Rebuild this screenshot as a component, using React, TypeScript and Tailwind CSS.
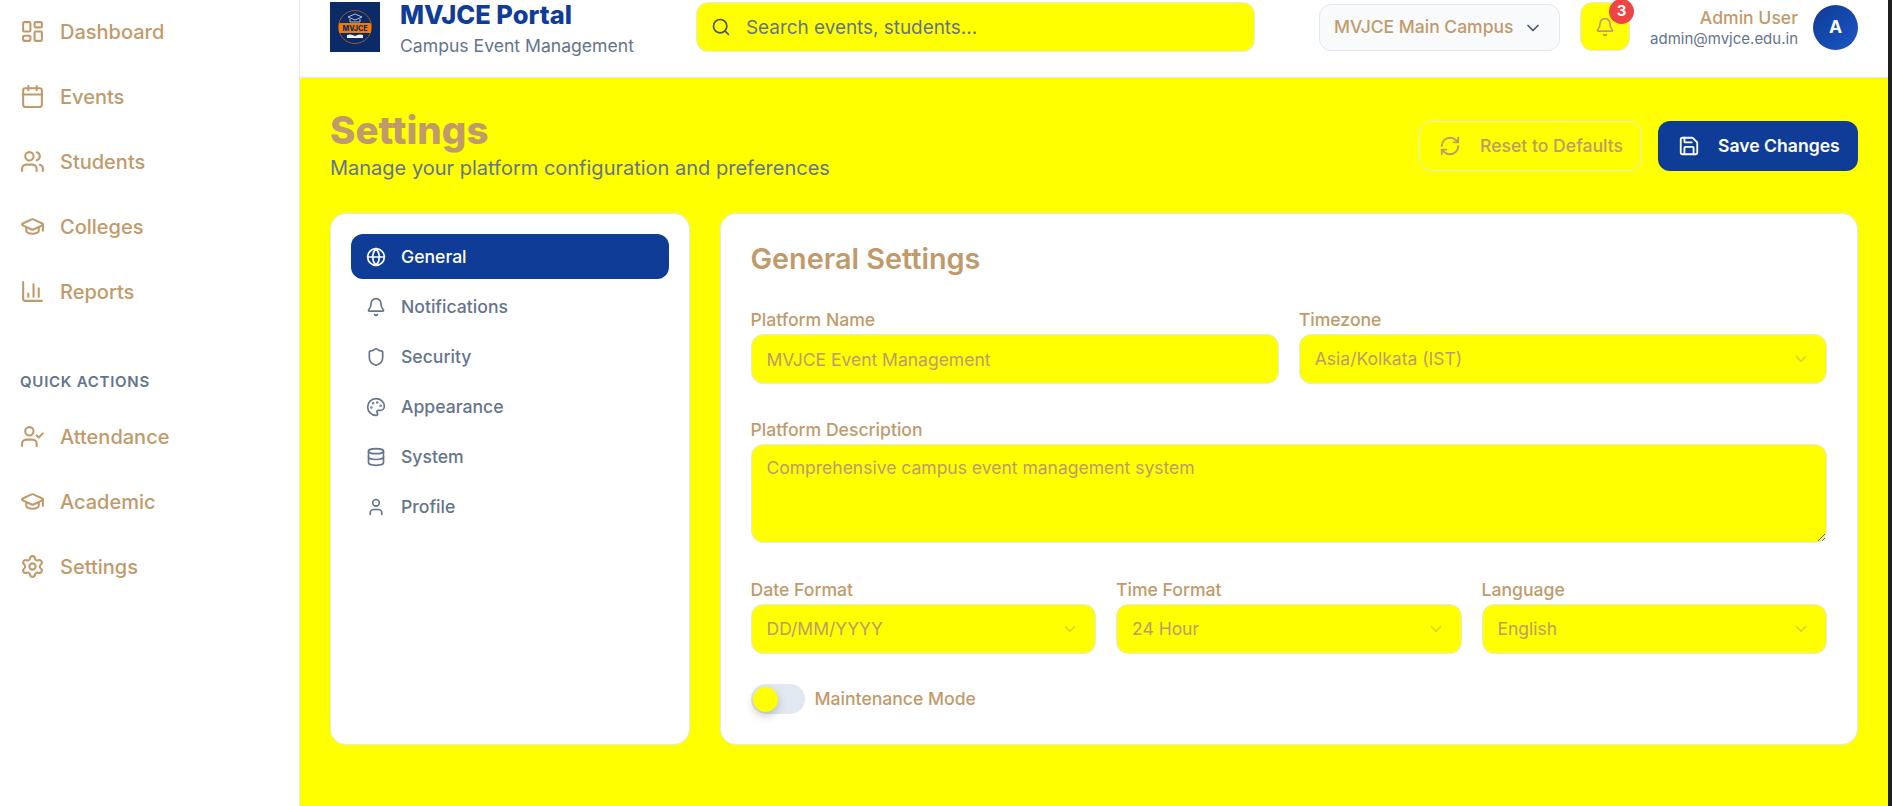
import { useState } from 'react';
import {
  LayoutDashboard, Calendar, Users, GraduationCap, ChartColumn, UserCheck, Settings, Search, ChevronDown, Bell,
  RefreshCw, Save, Globe, Shield, Palette, Database, User,
} from 'lucide-react';

const mainNav = [
  { label: 'Dashboard', icon: LayoutDashboard },
  { label: 'Events', icon: Calendar },
  { label: 'Students', icon: Users },
  { label: 'Colleges', icon: GraduationCap },
  { label: 'Reports', icon: ChartColumn },
];

const quickNav = [
  { label: 'Attendance', icon: UserCheck },
  { label: 'Academic', icon: GraduationCap },
  { label: 'Settings', icon: Settings },
];

const tabs = [
  { label: 'General', icon: Globe },
  { label: 'Notifications', icon: Bell },
  { label: 'Security', icon: Shield },
  { label: 'Appearance', icon: Palette },
  { label: 'System', icon: Database },
  { label: 'Profile', icon: User },
];

function Logo() {
  return (
    <svg viewBox="0 0 50 50" className="w-[50px] h-[50px] shrink-0">
      <rect width="50" height="50" fill="#0b2a66" />
      <circle cx="25" cy="25" r="16.5" fill="#0b2a66" stroke="#b5662a" strokeWidth="0.8" />
      <path d="M25 12l7 3-7 3-7-3z" fill="none" stroke="#dbe4f3" strokeWidth="0.8" />
      <path d="M20 17v3h10v-3" fill="none" stroke="#dbe4f3" strokeWidth="0.8" />
      <rect x="9" y="21" width="32" height="10" rx="1" fill="#f47a00" />
      <text x="25" y="29" textAnchor="middle" fontSize="7" fontWeight="800" fill="#0b2a66" fontFamily="Inter, sans-serif">MVJCE</text>
      <path d="M17 33q4-1.5 8 1q4-2.500 8-1v3h-16z" fill="#f3f4f8" />
    </svg>
  );
}

function SideItem({ label, icon: Icon }: { label: string; icon: typeof Bell }) {
  return (
    <div className="flex items-center gap-[15px] h-[65px] pl-5 text-[#c19a6b]">
      <Icon size={25} strokeWidth={2} className="shrink-0" />
      <span className="text-[20px] font-medium">{label}</span>
    </div>
  );
}

function Label({ children }: { children: string }) {
  return <label className="block h-[29px] text-[17.6px] leading-[30px] font-medium text-[#c19a6b]">{children}</label>;
}

const fieldClass = 'w-full h-[50px] rounded-xl border border-[#e2e8f0] bg-[#ffff00] px-[15px] text-[17.5px] text-[#c19a6b] outline-none';

function TextField({ label, value }: { label: string; value: string }) {
  return (
    <div>
      <Label>{label}</Label>
      <input readOnly value={value} className={fieldClass} />
    </div>
  );
}

function SelectField({ label, value }: { label: string; value: string }) {
  return (
    <div>
      <Label>{label}</Label>
      <div className="relative">
        <select defaultValue={value} className={`${fieldClass} appearance-none`}>
          <option>{value}</option>
        </select>
        <ChevronDown size={18} className="absolute right-[17px] top-4 text-[#c19a6b] opacity-50" />
      </div>
    </div>
  );
}

export default function App() {
  const [active] = useState('General');

  return (
    <div className="flex h-screen overflow-hidden border-r-[4px] border-[#1f1f1f] bg-white font-['Inter',sans-serif]">
      <aside className="w-[300px] shrink-0 border-r border-[#e2e8f0] bg-white">
        <div className="-mt-px">
          {mainNav.map(item => <SideItem key={item.label} {...item} />)}
        </div>
        <p className="mt-[47px] mb-[11px] h-[22px] pl-5 text-[15px] leading-[22px] font-semibold tracking-wider text-[#64748b]">QUICK ACTIONS</p>
        {quickNav.map(item => <SideItem key={item.label} {...item} />)}
      </aside>

      <div className="flex-1 min-w-0 flex flex-col">
        <header className="flex h-[78px] shrink-0 items-start border-b border-[#e2e8f0] bg-white pl-[30px] pr-[30px]">
          <div className="mt-0.5">
            <Logo />
          </div>
          <div className="ml-5 w-[296px]">
            <h1 className="text-[25.5px] leading-[30px] font-extrabold text-[#0f3c96]">MVJCE Portal</h1>
            <p className="mt-[3px] text-[17.6px] leading-[26px] text-[#64748b]">Campus Event Management</p>
          </div>
          <div className="flex items-center gap-[15px] mt-0.5 w-[559px] h-[50px] rounded-xl border border-[#e2e8f0] bg-[#ffff00] px-[14px]">
            <Search size={20} className="shrink-0 text-[#475569]" />
            <span className="mt-[3px] text-[18.9px] text-[#64748b]">Search events, students...</span>
          </div>
          <div className="flex items-center justify-between mt-1 ml-[64px] w-[241px] h-[47px] rounded-xl border border-[#e2e8f0] bg-[#f8fafc] pl-[14px] pr-4">
            <span className="text-[17.5px] font-medium text-[#c19a6b]">MVJCE Main Campus</span>
            <ChevronDown size={20} className="shrink-0 text-[#475569]" />
          </div>
          <div className="relative mt-0.5 ml-5 flex w-[50px] h-[49px] items-center justify-center rounded-xl border border-[#e2e8f0] bg-[#ffff00] text-[#c19a6b]">
            <Bell size={20} />
            <span className="absolute -top-[4px] -right-[5px] flex h-[25px] w-[25px] items-center justify-center rounded-full bg-[#ef4444] text-[15px] font-bold text-white">3</span>
          </div>
          <div className="ml-5 flex-1 text-right">
            <p className="mt-[7px] text-[17.6px] leading-[22px] font-medium text-[#c19a6b]">Admin User</p>
            <p className="text-[15px] leading-[20px] text-[#64748b]">admin@mvjce.edu.in</p>
          </div>
          <div className="ml-[15px] mt-[5px] flex h-[45px] w-[45px] shrink-0 items-center justify-center rounded-full bg-gradient-to-br from-[#0f3c96] to-[#1a56c4] text-[17.6px] font-bold text-white">A</div>
        </header>

        <main className="flex-1 bg-[#ffff00] pt-[30px] px-[30px]">
          <div className="flex items-start justify-between">
            <div>
              <h2 className="text-[38.5px] leading-[45px] font-extrabold text-[#c19a6b]">Settings</h2>
              <p className="text-[20px] leading-[30px] text-[#64748b]">Manage your platform configuration and preferences</p>
            </div>
            <div className="flex gap-4 mt-[13px]">
              <button className="flex items-center gap-[19px] h-[50px] w-[223px] pl-[19px] whitespace-nowrap rounded-xl border border-[#e2e8f0] bg-[#ffff00] text-[17.6px] font-medium text-[#c19a6b]">
                <RefreshCw size={22} className="shrink-0" /> Reset to Defaults
              </button>
              <button className="flex items-center gap-[18px] h-[50px] w-[200px] pl-5 whitespace-nowrap rounded-xl bg-[#0f3c96] text-[17.6px] font-semibold text-white">
                <Save size={22} className="shrink-0" /> Save Changes
              </button>
            </div>
          </div>

          <div className="grid grid-cols-4 gap-[30px] mt-[30px]">
            <nav className="h-[532px] rounded-2xl border border-[#e2e8f0] bg-white p-5">
              <div className="flex flex-col gap-[5px]">
                {tabs.map(({ label, icon: Icon }) => (
                  <div key={label} className={`flex items-center gap-[15px] h-[45px] px-[15px] pt-px rounded-xl text-[17.6px] font-medium ${active === label ? 'bg-[#0f3c96] text-white' : 'text-[#64748b]'}`}>
                    <Icon size={20} className="shrink-0" />
                    {label}
                  </div>
                ))}
              </div>
            </nav>

            <section className="col-span-3 h-[532px] rounded-2xl border border-[#e2e8f0] bg-white px-[30px] pt-[25px]">
              <h3 className="text-[28.8px] leading-[40px] font-semibold text-[#c19a6b]">General Settings</h3>
              <div className="grid grid-cols-2 gap-5 mt-[26px]">
                <TextField label="Platform Name" value="MVJCE Event Management" />
                <SelectField label="Timezone" value="Asia/Kolkata (IST)" />
              </div>
              <div className="mt-[31px]">
                <Label>Platform Description</Label>
                <textarea readOnly defaultValue="Comprehensive campus event management system" className={`${fieldClass} h-[99px] py-[10px] block`} />
              </div>
              <div className="grid grid-cols-3 gap-5 mt-[32px]">
                <SelectField label="Date Format" value="DD/MM/YYYY" />
                <SelectField label="Time Format" value="24 Hour" />
                <SelectField label="Language" value="English" />
              </div>
              <div className="flex items-center gap-[10px] mt-[30px]">
                <div className="relative h-[30px] w-[54px] rounded-full bg-[#e2e8f0]">
                  <span className="absolute left-[2px] top-[3px] h-[25px] w-[25px] rounded-full bg-[#ffff00] shadow-[0_4px_10px_rgba(0,0,0,0.2)]" />
                </div>
                <span className="text-[17.6px] font-medium text-[#c19a6b]">Maintenance Mode</span>
              </div>
            </section>
          </div>
        </main>
      </div>
    </div>
  );
}
